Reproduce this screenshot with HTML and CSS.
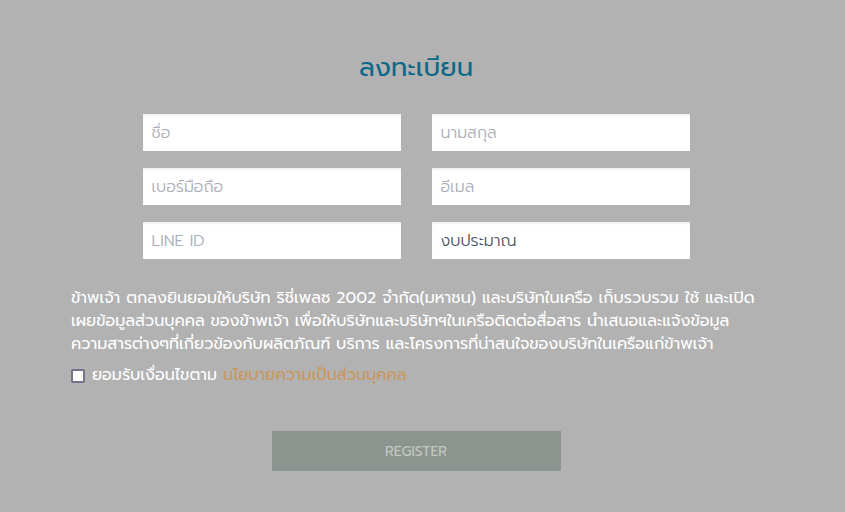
FILE: index.html
```html
<!DOCTYPE html>
<html lang="th">
<head>
  <meta charset="UTF-8">
  <meta name="viewport" content="width=device-width, initial-scale=1.0">
  <title>ลงทะเบียน</title>
  <link rel="stylesheet" href="styles.css">
</head>
<body>
  <div class="register">
    <h1 class="register-title">ลงทะเบียน</h1>

    <form class="register-form">
      <div class="field-grid">
        <input type="text" class="field" placeholder="ชื่อ">
        <input type="text" class="field" placeholder="นามสกุล">
        <input type="text" class="field" placeholder="เบอร์มือถือ">
        <input type="text" class="field" placeholder="อีเมล">
        <input type="text" class="field" placeholder="LINE ID">
        <div class="field field-select">งบประมาณ</div>
      </div>

      <p class="consent-text">
        ข้าพเจ้า ตกลงยินยอมให้บริษัท ริชี่เพลซ 2002 จำกัด(มหาชน) และบริษัทในเครือ เก็บรวบรวม ใช้ และเปิด<br>
        เผยข้อมูลส่วนบุคคล ของข้าพเจ้า เพื่อให้บริษัทและบริษัทฯในเครือติดต่อสื่อสาร นำเสนอและแจ้งข้อมูล<br>
        ความสารต่างๆที่เกี่ยวข้องกับผลิตภัณฑ์ บริการ และโครงการที่น่าสนใจของบริษัทในเครือแก่ข้าพเจ้า
      </p>

      <label class="consent-check">
        <span class="checkbox"></span>
        <span>ยอมรับเงื่อนไขตาม <a href="#" class="policy-link">นโยบายความเป็นส่วนบุคคล</a></span>
      </label>

      <div class="actions">
        <button type="button" class="register-button">REGISTER</button>
      </div>
    </form>
  </div>
</body>
</html>
```

FILE: styles.css
```css
body {
  margin: 0;
  background: #b2b2b2;
  font-family: 'Prompt', 'Kanit', 'Noto Sans Thai', 'Noto Sans', sans-serif;
  font-weight: 300;
  color: #fff;
}

.register {
  width: 832px;
  padding-top: 50px;
}

.register-title {
  margin: 0 0 28px;
  text-align: center;
  font-size: 26px;
  font-weight: 400;
  line-height: 36px;
  color: #0b6888;
}

.field-grid {
  display: grid;
  grid-template-columns: 258px 258px;
  gap: 17px 31px;
  justify-content: center;
}

.field {
  box-sizing: border-box;
  height: 37px;
  padding: 0 9px;
  border: none;
  background: #fff;
  box-shadow: inset 0 2px 2px rgba(0,0,0,0.06);
  font-family: inherit;
  font-weight: 300;
  font-size: 16px;
  color: #555;
  outline: none;
}

.field::placeholder {
  color: #a9adb7;
}

.field-select {
  display: flex;
  align-items: center;
  color: #4a5160;
}

.consent-text {
  margin: 28px 0 0 71px;
  font-size: 16px;
  font-weight: 400;
  line-height: 23px;
  white-space: nowrap;
}

.consent-check {
  display: flex;
  align-items: center;
  gap: 7px;
  margin: 8px 0 0 71px;
  font-size: 16px;
  font-weight: 400;
  line-height: 23px;
}

.checkbox {
  box-sizing: border-box;
  width: 14px;
  height: 14px;
  border: 2px solid #72728a;
  border-radius: 2px;
  background: #fff;
}

.policy-link {
  color: #c9975b;
  text-decoration: none;
}

.actions {
  display: flex;
  justify-content: center;
  margin-top: 44px;
}

.register-button {
  width: 289px;
  height: 40px;
  border: none;
  background: #8b948e;
  color: #c3c7c3;
  font-family: inherit;
  font-weight: 400;
  font-size: 14px;
  cursor: pointer;
}
```
